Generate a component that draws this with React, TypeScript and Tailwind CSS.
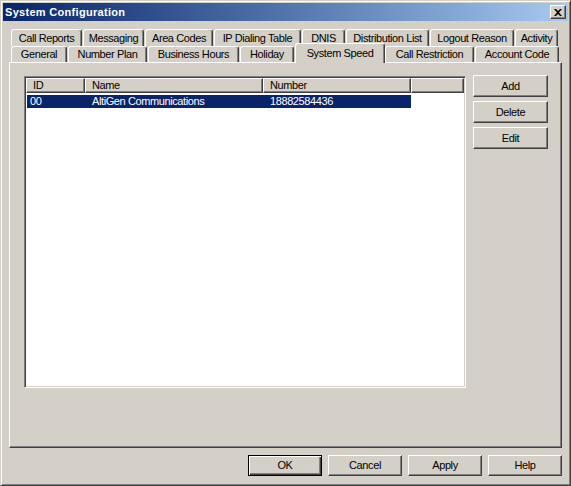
import React from 'react'

type TabDef = { label: string; w: string; selected?: boolean }

const backRow: TabDef[] = [
  { label: 'Call Reports', w: 'w-[72px]' },
  { label: 'Messaging', w: 'w-[62px]' },
  { label: 'Area Codes', w: 'w-[69px]' },
  { label: 'IP Dialing Table', w: 'w-[88px]' },
  { label: 'DNIS', w: 'w-[44px]' },
  { label: 'Distribution List', w: 'w-[84px]' },
  { label: 'Logout Reason', w: 'w-[85px]' },
  { label: 'Activity', w: 'w-[44px]' },
]

const frontRow: TabDef[] = [
  { label: 'General', w: 'w-[57px]' },
  { label: 'Number Plan', w: 'w-[80px]' },
  { label: 'Business Hours', w: 'w-[92px]' },
  { label: 'Holiday', w: 'w-[55px]' },
  { label: 'System Speed', w: 'w-[90px]', selected: true },
  { label: 'Call Restriction', w: 'w-[90px]' },
  { label: 'Account Code', w: 'w-[85px]' },
]

// raised 3d edge, classic win32 look
const raised =
  'border border-t-white border-l-white border-r-[#404040] border-b-[#404040] shadow-[inset_-1px_-1px_#808080]'

function Tab({ t }: { t: TabDef }) {
  if (t.selected) {
    return (
      <div
        className={`${t.w} relative z-10 -mb-px h-[20px] flex justify-center pt-[4px] bg-[#d4d0c8] border-t border-l border-r border-t-white border-l-white border-r-[#404040] shadow-[inset_-1px_0_#808080] rounded-t-[3px]`}
      >
        {t.label}
      </div>
    )
  }
  return (
    <div className={`${t.w} h-full pr-px`}>
      <div className="h-full flex items-center justify-center bg-[#d4d0c8] border-t border-l border-r border-t-white border-l-white border-r-[#404040] shadow-[inset_-1px_0_#808080] rounded-t-[3px]">
        {t.label}
      </div>
    </div>
  )
}

function Button({ label, w, isDefault }: { label: string; w: string; isDefault?: boolean }) {
  if (isDefault) {
    return (
      <button className={`${w} h-[21px] flex items-center justify-center bg-[#d4d0c8] border border-black shadow-[inset_1px_1px_#fff,inset_-1px_-1px_#404040,inset_-2px_-2px_#808080]`}>
        {label}
      </button>
    )
  }
  return (
    <button className={`${w} h-[21px] flex items-center justify-center bg-[#d4d0c8] ${raised}`}>
      {label}
    </button>
  )
}

export default function App() {
  return (
    <div
      className="w-[571px] h-[486px] bg-[#d4d0c8] text-black text-[11px] tracking-[-0.4px] leading-none select-none"
      style={{ fontFamily: '"Liberation Sans", Arial, sans-serif' }}
    >
      <div className="w-full h-full flex flex-col p-[2px] border border-t-[#d4d0c8] border-l-[#d4d0c8] border-r-[#404040] border-b-[#404040] shadow-[inset_1px_1px_#fff,inset_-1px_-1px_#808080]">
        {/* title bar */}
        <div className="h-[18px] shrink-0 flex items-center justify-between pl-[2px] pr-[2px] bg-linear-to-r from-[#0a246a] to-[#a6caf0]">
          <span className="text-white font-bold tracking-[0.3px]">System Configuration</span>
          <div className={`w-[16px] h-[14px] flex items-center justify-center bg-[#d4d0c8] ${raised}`}>
            <svg width="8" height="7" viewBox="0 0 8 7">
              <path d="M0 0h2l2 2 2-2h2L5 3.5 8 7H6L4 5 2 7H0l3-3.5z" fill="#000" />
            </svg>
          </div>
        </div>

        {/* tabs */}
        <div className="pt-[8px] pl-[8px]">
          <div className="flex h-[17px]">
            {backRow.map(t => (
              <Tab key={t.label} t={t} />
            ))}
          </div>
          <div className="flex items-end h-[16px]">
            {frontRow.map(t => (
              <Tab key={t.label} t={t} />
            ))}
          </div>
        </div>

        {/* tab page */}
        <div className="ml-[6px] w-[553px] h-[386px] flex items-start gap-[7px] pl-[14px] pt-[12px] border border-t-white border-l-white border-r-[#404040] border-b-[#404040] shadow-[inset_-1px_-1px_#808080]">
          <div className="mt-px w-[442px] h-[312px] bg-white border border-t-[#808080] border-l-[#808080] border-r-white border-b-white shadow-[inset_1px_1px_#404040,inset_-1px_-1px_#d4d0c8] p-px">
            <div className="flex h-[15px] bg-[#d4d0c8]">
              <div className={`w-[59px] flex items-center pl-[6px] ${raised}`}>ID</div>
              <div className={`w-[178px] flex items-center pl-[6px] ${raised}`}>Name</div>
              <div className={`w-[148px] flex items-center pl-[6px] ${raised}`}>Number</div>
              <div className={`w-[53px] ${raised}`} />
            </div>
            <div className="mt-[2px] ml-px flex h-[13px] w-[384px] items-center bg-[#0a246a] text-white">
              <div className="w-[58px] pl-[3px]">00</div>
              <div className="w-[178px] pl-[7px]">AltiGen Communications</div>
              <div className="w-[148px] pl-[7px]">18882584436</div>
            </div>
          </div>
          <div className="flex flex-col gap-[4px]">
            <button className={`w-[75px] h-[22px] flex items-center justify-center bg-[#d4d0c8] ${raised}`}>Add</button>
            <button className={`w-[75px] h-[22px] flex items-center justify-center bg-[#d4d0c8] ${raised}`}>Delete</button>
            <button className={`w-[75px] h-[22px] flex items-center justify-center bg-[#d4d0c8] ${raised}`}>Edit</button>
          </div>
        </div>

        {/* dialog buttons */}
        <div className="mt-[7px] ml-[245px] flex gap-[6px]">
          <Button label="OK" w="w-[74px]" isDefault />
          <Button label="Cancel" w="w-[74px]" />
          <Button label="Apply" w="w-[74px]" />
          <Button label="Help" w="w-[74px]" />
        </div>
      </div>
    </div>
  )
}
